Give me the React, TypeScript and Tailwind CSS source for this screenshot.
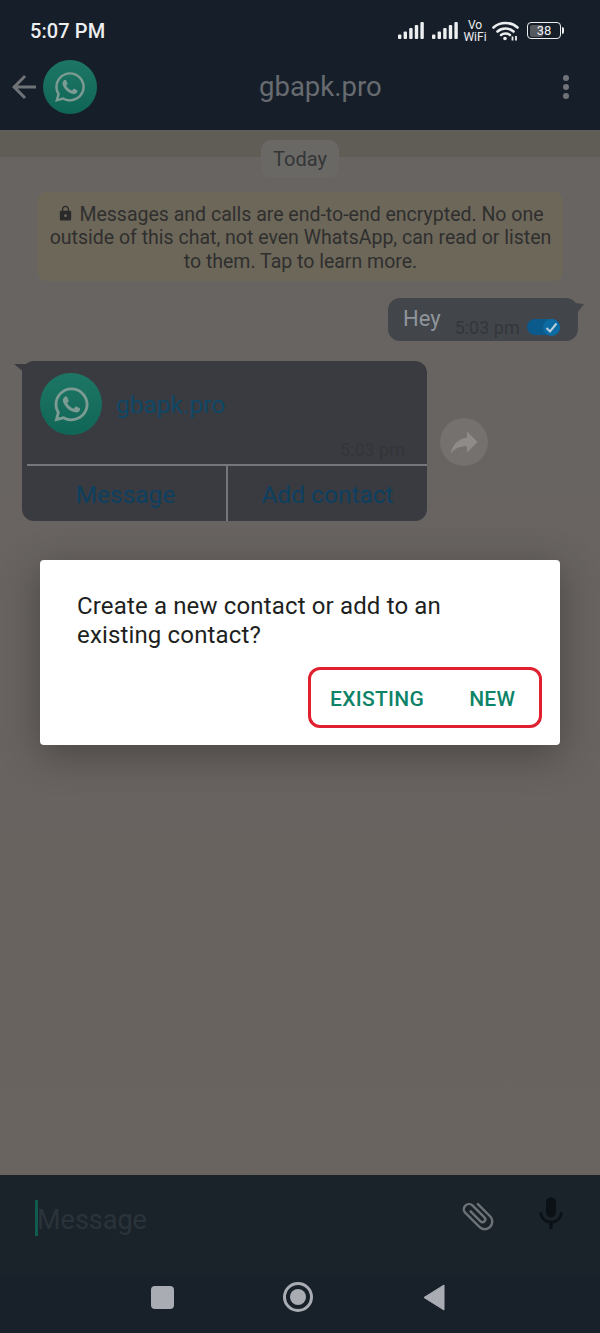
import React from "react";
import { FaWhatsapp } from "react-icons/fa";
import { MdLock, MdMic, MdOutlineAttachFile, MdReply, MdArrowBack } from "react-icons/md";

function Signal() {
  return (
    <svg width="26" height="17" viewBox="0 0 26 17" fill="#eceef0">
      <rect x="0" y="12.5" width="3.4" height="4.5" rx="1" />
      <rect x="5.6" y="9.5" width="3.4" height="7.5" rx="1" />
      <rect x="11.2" y="6" width="3.4" height="11" rx="1" />
      <rect x="16.8" y="3" width="3.4" height="14" rx="1" />
      <rect x="22.4" y="0" width="3.4" height="17" rx="1" />
    </svg>
  );
}

function Wifi() {
  return (
    <svg width="27" height="20" viewBox="0 0 27 20" fill="none" stroke="#eceef0" strokeLinecap="round">
      <path d="M1.5 6.5 C8 0.5 19 0.5 25.5 6.5" strokeWidth="2.6" />
      <path d="M5.5 10.5 C10 6.5 17 6.5 21.5 10.5" strokeWidth="2.6" />
      <path d="M9 14 C11.5 12 15.5 12 18 14" strokeWidth="2.4" />
      <circle cx="13" cy="17.5" r="1.8" fill="#eceef0" stroke="none" />
      <path d="M20.5 19.5 V15.5 M24 19.5 V15" strokeWidth="1.8" strokeLinecap="butt" />
    </svg>
  );
}

function Logo({ size, icon }: { size: string; icon: string }) {
  return (
    <div className={`${size} shrink-0 rounded-full bg-gradient-to-b from-[#1d7665] to-[#106656] flex items-center justify-center`}>
      <FaWhatsapp className={`${icon} text-[#7c9b93]`} />
    </div>
  );
}

export default function App() {
  return (
    <div className="relative w-[600px] h-[1333px] overflow-hidden flex flex-col bg-gradient-to-b from-[#676461] to-[#6a6360] font-['Roboto',sans-serif]">
      {/* header */}
      <header className="h-[130px] shrink-0 bg-[#161f29] flex flex-col">
        <div className="h-[60px] flex items-center pl-[30px] pr-[36px] pt-[1px]">
          <span className="text-[20px] font-medium text-[#eceef0] leading-none tracking-[0.1px]">5:07 PM</span>
          <div className="ml-auto flex items-center">
            <Signal />
            <div className="w-[8px]" />
            <Signal />
            <div className="ml-[5px] w-[24px] flex flex-col items-center text-[#eceef0] text-[12px] leading-[12px] font-normal">
              <span>Vo</span>
              <span>WiFi</span>
            </div>
            <div className="ml-[5px]">
              <Wifi />
            </div>
            <div className="ml-[8px] flex items-center">
              <div className="relative w-[34px] h-[17px] rounded-[4px] border-[1.5px] border-[#eceef0] overflow-hidden flex items-center justify-center p-[1.5px]">
                <div className="absolute left-[1.5px] top-[1.5px] bottom-[1.5px] w-[13px] bg-[#55585c] rounded-[2px]" />
                <span className="relative text-[13px] leading-none text-[#eceef0]">38</span>
              </div>
              <div className="ml-[1px] w-[2px] h-[7px] bg-[#eceef0] rounded-r-[2px]" />
            </div>
          </div>
        </div>
        <div className="flex-1 flex items-center pl-[6px] pr-[31px] pb-[16px]">
          <MdArrowBack className="text-[#6f7276] w-[36px] h-[36px] shrink-0" />
          <div className="ml-[1px]">
            <Logo size="w-[54px] h-[54px]" icon="w-[34px] h-[34px]" />
          </div>
          <span className="ml-[162px] text-[27.5px] leading-none text-[#676b70]">gbapk.pro</span>
          <div className="ml-auto flex flex-col gap-[3px]">
            <span className="w-[6px] h-[6px] rounded-full bg-[#6f7377]" />
            <span className="w-[6px] h-[6px] rounded-full bg-[#6f7377]" />
            <span className="w-[6px] h-[6px] rounded-full bg-[#6f7377]" />
          </div>
        </div>
      </header>

      {/* chat */}
      <main className="flex-1 flex flex-col">
        <div className="h-[27px] shrink-0 bg-[#605d56]" />
        <div className="self-center -mt-[17px] w-[78px] h-[38px] rounded-[10px] bg-[#6a6864] flex items-center justify-center text-[20px] text-[#333538]">
          Today
        </div>
        <div className="mx-[38px] mt-[14px] w-[525px] h-[89px] rounded-[8px] bg-[#6d6759] flex flex-col items-center justify-center text-[19.5px] leading-[23.5px] text-[#2f2f2f] text-center pt-[3px]">
          <div className="whitespace-nowrap">
            <MdLock className="inline-block w-[17px] h-[17px] mr-[5px] -mt-[4px] text-[#2a2a2a]" />
            Messages and calls are end-to-end encrypted. No one
          </div>
          <div className="whitespace-nowrap">outside of this chat, not even WhatsApp, can read or listen</div>
          <div className="whitespace-nowrap">to them. Tap to learn more.</div>
        </div>

        {/* outgoing */}
        <div className="mt-[17px] self-end mr-[22px] relative w-[190px] h-[43px] rounded-[12px] bg-[#42454a] flex pl-[15px]">
          <svg className="absolute -right-[6px] top-[5px]" width="10" height="10" viewBox="0 0 10 10" fill="#42454a">
            <path d="M0 0 L10 1 L3 10 Z" />
          </svg>
          <span className="text-[22px] leading-none mt-[10px] text-[#8f959b]">Hey</span>
          <span className="ml-[14px] mt-[21px] text-[18px] leading-none text-[#33373c]">5:03 pm</span>
          <div className="relative ml-[7px] mt-[21px] w-[33px] h-[16px] rounded-full bg-[#0b5a8c] flex items-center justify-end">
            <div className="w-[17px] h-[17px] rounded-full bg-[#0d6ba3] flex items-center justify-center">
              <svg width="13" height="11" viewBox="0 0 13 11" fill="none" stroke="#b9cfdd" strokeWidth="2">
                <path d="M1.5 6 L5 9.5 L11.5 1.5" />
              </svg>
            </div>
          </div>
        </div>

        {/* contact card row */}
        <div className="mt-[20px] flex items-center">
          <div className="relative ml-[22px] w-[405px] h-[160px] rounded-[12px] bg-[#393b40] flex flex-col">
            <svg className="absolute -left-[8px] top-[3px]" width="12" height="10" viewBox="0 0 14 12" fill="#393b40">
              <path d="M0 0 L14 0 L14 12 Z" />
            </svg>
            <div className="h-[103px] shrink-0 flex flex-col pl-[18px] pt-[12px]">
              <div className="flex items-center">
                <Logo size="w-[62px] h-[62px]" icon="w-[39px] h-[39px]" />
                <span className="ml-[14px] mt-[2px] text-[24.5px] leading-none text-[#0f4766]">gbapk.pro</span>
              </div>
              <span className="self-end mr-[22px] mt-[6px] text-[18px] leading-none text-[#333539]">5:03 pm</span>
            </div>
            <div className="flex-1 ml-[5px] border-t-2 border-[#74767a] flex">
              <div className="w-[201px] border-r-2 border-[#74767a] flex items-center justify-center text-[24.5px] text-[#0d4060] pr-[2px] pt-[4px]">
                Message
              </div>
              <div className="flex-1 flex items-center justify-center text-[24.5px] text-[#0d4060] pt-[4px]">Add contact</div>
            </div>
          </div>
          <div className="ml-[13px] mt-[1px] w-[48px] h-[48px] rounded-full bg-[#75716e] flex items-center justify-center">
            <MdReply className="w-[36px] h-[36px] text-[#8e8b89] -scale-x-100" />
          </div>
        </div>
      </main>

      {/* input */}
      <div className="h-[158px] shrink-0 flex flex-col bg-[#1b232a]">
        <div className="h-[100px] flex items-start pl-[35px] pr-[33px] pt-[25px]">
          <div className="w-[3px] h-[36px] bg-[#0f5c4e]" />
          <span className="text-[27px] leading-[36px] text-[#2b333a] mt-[2px] -ml-[1px]">Message</span>
          <MdOutlineAttachFile className="ml-auto mt-[-3px] mr-[12px] w-[38px] h-[38px] text-[#6d7277] -rotate-45" />
          <MdMic className="ml-[22px] mt-[-6px] w-[40px] h-[40px] text-[#0c1116] -mr-[4px]" />
        </div>
        <nav className="flex-1 bg-[#18202a] flex items-start pt-[11px] pl-[151px]">
          <div className="w-[23px] h-[23px] rounded-[4px] bg-[#a9adb3]" />
          <div className="ml-[109px] -mt-[4px] w-[30px] h-[30px] rounded-full border-[3px] border-[#a9adb3] flex items-center justify-center">
            <div className="w-[16px] h-[16px] rounded-full bg-[#a9adb3]" />
          </div>
          <svg className="ml-[110px] -mt-[2px]" width="22" height="27" viewBox="0 0 22 27" fill="#a9adb3">
            <path d="M21 1 V26 L1 13.5 Z" strokeLinejoin="round" stroke="#a9adb3" strokeWidth="1" />
          </svg>
        </nav>
      </div>

      {/* dialog */}
      <div className="absolute left-[40px] top-[560px] w-[520px] h-[185px] bg-white rounded-[4px] shadow-[0_10px_40px_rgba(0,0,0,0.3)] pl-[37px] pr-[18px] pt-[32px] flex flex-col">
        <p className="text-[24px] leading-[29px] text-[#1d1f21] tracking-[0.15px]">
          Create a new contact or add to an
          <br />
          existing contact?
        </p>
        <div className="self-end mt-[17px] w-[234px] h-[61px] rounded-[12px] border-[3px] border-[#e0202f] flex items-center pl-[19px] gap-[45px] text-[21px] font-medium text-[#0d8468] tracking-[0.3px] pt-[4px]">
          <span>EXISTING</span>
          <span>NEW</span>
        </div>
      </div>
    </div>
  );
}
